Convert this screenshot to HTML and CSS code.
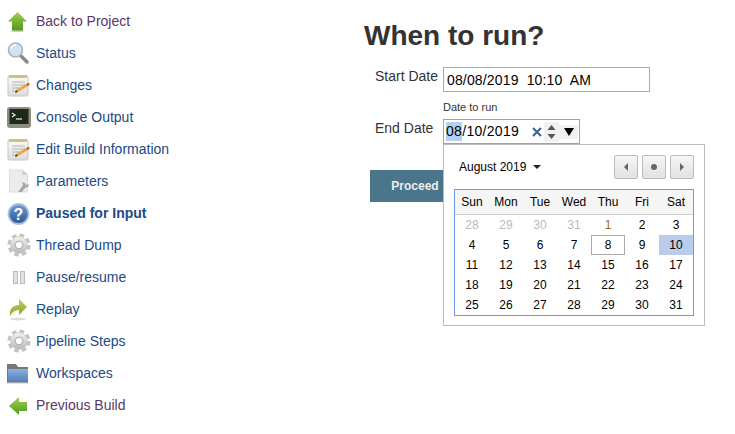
FILE: index.html
```html
<!DOCTYPE html>
<html lang="en">
<head>
    <meta charset="UTF-8">
    <title>When to run?</title>
    <link rel="stylesheet" href="styles.css">
</head>
<body>
    <svg class="defs" width="0" height="0">
        <defs>
            <linearGradient id="green" x1="0" y1="0" x2="0" y2="1"><stop offset="0" stop-color="#a4d050"/><stop offset="1" stop-color="#4f9a1e"/></linearGradient>
            <linearGradient id="olive" x1="0" y1="0" x2="0" y2="1"><stop offset="0" stop-color="#bcd060"/><stop offset="1" stop-color="#8aa82a"/></linearGradient>
            <linearGradient id="grey" x1="0" y1="0" x2="0" y2="1"><stop offset="0" stop-color="#f2f2f2"/><stop offset="1" stop-color="#b8b8b8"/></linearGradient>
            <linearGradient id="paper" x1="0" y1="0" x2="0" y2="1"><stop offset="0" stop-color="#fbfbfb"/><stop offset="1" stop-color="#dcdcdc"/></linearGradient>
            <linearGradient id="blue" x1="0" y1="0" x2="0" y2="1"><stop offset="0" stop-color="#6f9bd0"/><stop offset="1" stop-color="#28579a"/></linearGradient>
            <linearGradient id="folder" x1="0" y1="0" x2="0" y2="1"><stop offset="0" stop-color="#8cb2e0"/><stop offset="1" stop-color="#4f7fbd"/></linearGradient>
            <symbol id="notepad" viewBox="0 0 24 24">
                <rect x="1" y="3" width="20" height="20" rx="1.500" fill="url(#paper)" stroke="#c4c4c4"/>
                <rect x="2" y="2" width="18" height="3" fill="#d2c080"/>
                <path d="M5 9h13M5 12h13M5 15h8M5 18h5" stroke="#b4b4b4" stroke-width="1"/>
                <path d="M8 20l1-3 10-6 2 2-10 6z" fill="#e8a838"/>
                <path d="M19 11l2 2 2-2-2-1z" fill="#d0452c"/>
                <path d="M8 20l1-3 2 2z" fill="#444"/>
            </symbol>
            <symbol id="gear" viewBox="0 0 24 24">
                <circle cx="12" cy="12" r="9.500" fill="none" stroke="#c4c4c4" stroke-width="4" stroke-dasharray="4.500 3"/>
                <circle cx="12" cy="12" r="8.500" fill="url(#grey)" stroke="#c0c0c0" stroke-width=".5"/>
                <circle cx="12" cy="12" r="3.800" fill="#fff" stroke="#aaa"/>
            </symbol>
        </defs>
    </svg>

    <div class="page">
        <ul class="sidebar">
            <li><svg class="icon" viewBox="0 0 24 24"><ellipse cx="10.500" cy="22" rx="7" ry="1.200" fill="#ccc"/><path d="M10.500 3l9.500 9.500h-4v9H5v-9H1z" fill="url(#green)"/></svg><a class="visited">Back to Project</a></li>
            <li><svg class="icon" viewBox="0 0 24 24"><path d="M14 15l6 6" stroke="#8a8a8a" stroke-width="3.500" stroke-linecap="round"/><circle cx="8.500" cy="9" r="7" fill="#cfe3f5" stroke="#a8b4c0" stroke-width="1.600"/><path d="M4 8a5 5 0 0 1 5-4" stroke="#fff" stroke-width="1.500" fill="none"/></svg><a>Status</a></li>
            <li><svg class="icon"><use href="#notepad"/></svg><a>Changes</a></li>
            <li><svg class="icon" viewBox="0 0 24 24"><rect x="0" y="2" width="24" height="21" rx="3" fill="#8c8c80"/><rect x="2.500" y="4" width="19" height="15" fill="#1d2a1a"/><path d="M5 8l3 2-3 2" stroke="#e8f0e0" stroke-width="1.200" fill="none"/><path d="M9 14h6" stroke="#e8f0e0" stroke-width="1.200"/></svg><a>Console Output</a></li>
            <li><svg class="icon"><use href="#notepad"/></svg><a>Edit Build Information</a></li>
            <li><svg class="icon" viewBox="0 0 24 24"><path d="M2.500 1h13l5 5v17h-18z" fill="#ececec" stroke="#ddd"/><path d="M15.500 1v5h5z" fill="#ccc"/><path d="M11 23l5-7-1-3 3 1 1 2 3-1-1 3-3 1-3 4z" fill="#a8a8a8"/></svg><a>Parameters</a></li>
            <li><svg class="icon" viewBox="0 0 24 24"><circle cx="11.500" cy="13" r="10" fill="url(#blue)" stroke="#a9c0dc" stroke-width="1.800"/><text class="help" x="11.500" y="18.500" text-anchor="middle">?</text></svg><a class="current">Paused for Input</a></li>
            <li><svg class="icon"><use href="#gear"/></svg><a>Thread Dump</a></li>
            <li><svg class="icon" viewBox="0 0 24 24"><rect x="6.500" y="6.500" width="4" height="12" fill="#e2e2e2" stroke="#bbb"/><rect x="13.500" y="6.500" width="4" height="12" fill="#e2e2e2" stroke="#bbb"/></svg><a>Pause/resume</a></li>
            <li><svg class="icon" viewBox="0 0 24 24"><ellipse cx="11" cy="22" rx="8" ry="1.500" fill="#ddd"/><path d="M3 19c-1-7 3-11 9-11V2l8 8-8 8v-5c-4 0-7 2-9 6z" fill="url(#olive)"/></svg><a>Replay</a></li>
            <li><svg class="icon"><use href="#gear"/></svg><a>Pipeline Steps</a></li>
            <li><svg class="icon" viewBox="0 0 24 24"><path d="M0 3h9l2 3h10v16H0z" fill="#777"/><path d="M1 8h20v13H1z" fill="url(#folder)"/><path d="M0 22h21" stroke="#ccc"/></svg><a>Workspaces</a></li>
            <li><svg class="icon" viewBox="0 0 24 24"><path d="M2 13l10-9v5h8v9h-8v4z" fill="url(#green)"/></svg><a class="visited">Previous Build</a></li>
        </ul>

        <div class="main">
            <h1>When to run?</h1>
            <div class="field">
                <label class="field-label">Start Date</label>
                <input class="date-input" type="text" value="08/08/2019  10:10  AM">
            </div>
            <div class="hint">Date to run</div>
            <div class="field">
                <label class="field-label">End Date</label>
                <div class="date-box">
                    <span class="date-text"><span class="selected">08</span>/10/2019</span>
                    <svg class="clear" viewBox="0 0 10 10"><path d="M1 1l8 8M9 1l-8 8" stroke="#3f659c" stroke-width="2.200"/></svg>
                    <span class="spin"><svg viewBox="0 0 15 20"><path d="M7.500 3l4 5h-8zM7.500 17l4-5h-8z" fill="#555"/></svg></span>
                    <span class="drop"><i class="drop-arrow"></i></span>
                    <div class="picker">
                        <div class="picker-head">
                            <span class="month">August 2019 <i class="caret"></i></span>
                            <span class="nav">
                                <button class="nav-btn"><i class="tri-left"></i></button>
                                <button class="nav-btn"><i class="dot"></i></button>
                                <button class="nav-btn"><i class="tri-right"></i></button>
                            </span>
                        </div>
                        <div class="cal">
                            <div class="cal-head">
                                <span>Sun</span><span>Mon</span><span>Tue</span><span>Wed</span><span>Thu</span><span>Fri</span><span>Sat</span>
                            </div>
                            <div class="cal-days">
                                <span class="muted">28</span><span class="muted">29</span><span class="muted">30</span><span class="muted">31</span><span class="first">1</span><span>2</span><span>3</span>
                                <span>4</span><span>5</span><span>6</span><span>7</span><span class="today">8</span><span>9</span><span class="picked">10</span>
                                <span>11</span><span>12</span><span>13</span><span>14</span><span>15</span><span>16</span><span>17</span>
                                <span>18</span><span>19</span><span>20</span><span>21</span><span>22</span><span>23</span><span>24</span>
                                <span>25</span><span>26</span><span>27</span><span>28</span><span>29</span><span>30</span><span>31</span>
                            </div>
                        </div>
                    </div>
                </div>
            </div>
            <button class="proceed">Proceed</button>
        </div>
    </div>
</body>
</html>
```

FILE: styles.css
```css
body {
    margin: 0;
    font-family: "Liberation Sans", Arial, sans-serif;
    font-size: 14px;
    color: #333;
    background: #fff;
    overflow: hidden;
}
.defs {
    display: block;
    height: 0;
}
.page {
    display: flex;
    height: 434px;
}
.sidebar {
    width: 364px;
    flex: none;
    margin: 0;
    padding: 5px 0 0 7px;
    box-sizing: border-box;
    list-style: none;
}
.sidebar li {
    display: flex;
    align-items: center;
    gap: 5px;
    height: 32px;
}
.sidebar a {
    color: #204a87;
}
.sidebar a.visited {
    color: #5c3566;
}
.sidebar a.current {
    font-weight: bold;
}
.icon {
    width: 24px;
    height: 24px;
    flex: none;
}
.help {
    font: bold 16px "Liberation Sans", Arial, sans-serif;
    fill: #fff;
}
.main {
    flex: 1;
}
h1 {
    margin: 19px 0 14px;
    font-size: 28px;
    line-height: 34px;
    font-weight: bold;
    color: #333;
}
.field {
    display: flex;
    align-items: flex-start;
}
.field-label {
    width: 79px;
    padding: 0 0 0 11px;
    box-sizing: border-box;
    line-height: 18px;
}
.date-input {
    width: 207px;
    height: 25px;
    margin: 0;
    padding: 0 3px;
    box-sizing: border-box;
    border: 1px solid #aaa;
    font: 14px "Liberation Sans", Arial, sans-serif;
    letter-spacing: .15px;
    color: #000;
    outline: none;
}
.hint {
    margin: 8px 0 4px 79px;
    font-size: 11px;
    line-height: 15px;
}
.date-box {
    position: relative;
    display: flex;
    align-items: center;
    width: 137px;
    height: 25px;
    padding-left: 2px;
    box-sizing: border-box;
    border: 1px solid #7da6e8;
    color: #000;
}
.date-text {
    width: 86px;
    letter-spacing: .3px;
}
.selected {
    background: #b4d0f4;
    display: inline-block;
    line-height: 19px;
}
.clear {
    width: 10px;
    height: 10px;
    margin-right: 2px;
}
.spin {
    width: 15px;
    height: 20px;
    background: #f1f1f1;
    display: flex;
}
.spin svg {
    width: 15px;
    height: 20px;
}
.drop {
    display: flex;
    align-items: center;
    justify-content: center;
    width: 19px;
    height: 14px;
    background: #f1f1f1;
}
.drop-arrow {
    border: 5px solid transparent;
    border-top: 8px solid #000;
    border-bottom: 0;
}
.picker {
    position: absolute;
    top: 24px;
    left: -1px;
    width: 262px;
    height: 182px;
    box-sizing: border-box;
    border: 1px solid #bbb;
    background: #fff;
    padding: 10px;
    z-index: 2;
}
.picker-head {
    display: flex;
    justify-content: space-between;
    align-items: center;
    height: 24px;
    margin-bottom: 10px;
}
.month {
    margin-left: 5px;
    font-size: 12px;
}
.caret {
    display: inline-block;
    margin-left: 3px;
    vertical-align: 2px;
    border: 4px solid transparent;
    border-top-color: #222;
    border-bottom: 0;
}
.nav {
    display: flex;
    gap: 4px;
}
.nav-btn {
    display: flex;
    align-items: center;
    justify-content: center;
    width: 24px;
    height: 24px;
    padding: 0;
    border: 1px solid #bbb;
    border-radius: 2px;
    background: linear-gradient(#f6f6f6, #e2e2e2);
}
.tri-left {
    border: 4px solid transparent;
    border-right-color: #666;
    border-left: 0;
}
.tri-right {
    border: 4px solid transparent;
    border-left-color: #666;
    border-right: 0;
}
.dot {
    width: 6px;
    height: 6px;
    border-radius: 50%;
    background: #666;
}
.cal {
    border: 1px solid #6d9ae8;
    width: 240px;
    box-sizing: border-box;
    color: #000;
    font-size: 12px;
}
.cal-head {
    display: grid;
    grid-template-columns: repeat(7, 34px);
    height: 24px;
    line-height: 24px;
    text-align: center;
    background: #f5f5f5;
    border-bottom: 1px solid #ccc;
}
.cal-days {
    display: grid;
    grid-template-columns: repeat(7, 34px);
    grid-auto-rows: 20px;
    line-height: 20px;
    text-align: center;
}
.muted {
    color: #bbb;
}
.first {
    color: #a86a00;
}
.today {
    box-sizing: border-box;
    border: 1px solid #aaa;
    line-height: 18px;
}
.picked {
    background: #b9cdea;
}
.proceed {
    display: block;
    width: 90px;
    height: 32px;
    margin: 26px 0 0 6px;
    padding: 0;
    border: none;
    background: #4b758b;
    color: #e8eef2;
    font: bold 12px "Liberation Sans", Arial, sans-serif;
}
```
